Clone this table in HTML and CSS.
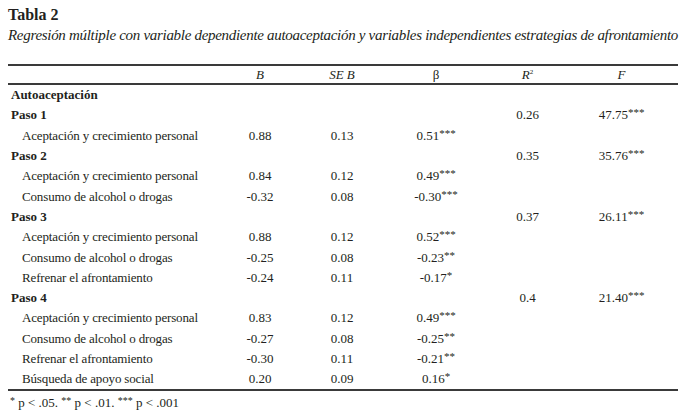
FILE: index.html
```html
<!DOCTYPE html>
<html lang="es">
<head>
<meta charset="utf-8">
<title>Tabla 2</title>
<link rel="stylesheet" href="styles.css">
</head>
<body>
<div class="page">
  <h1 class="title">Tabla 2</h1>
  <p class="caption">Regresión múltiple con variable dependiente autoaceptación y variables independientes estrategias de afrontamiento</p>
  <table class="reg">
    <colgroup>
      <col class="c-var"><col class="c-b"><col class="c-se"><col class="c-beta"><col class="c-r"><col class="c-f">
    </colgroup>
    <thead>
      <tr><th></th><th><i>B</i></th><th><i>SE B</i></th><th>β</th><th><i>R</i><sup>2</sup></th><th><i>F</i></th></tr>
    </thead>
    <tbody>
      <tr class="grp"><td class="lbl">Autoaceptación</td><td></td><td></td><td></td><td></td><td></td></tr>
      <tr class="step"><td class="lbl">Paso 1</td><td></td><td></td><td></td><td class="tn">0.26</td><td class="tn">47.75<sup>***</sup></td></tr>
      <tr><td class="sub">Aceptación y crecimiento personal</td><td>0.88</td><td>0.13</td><td class="tn">0.51<sup>***</sup></td><td></td><td></td></tr>
      <tr class="step"><td class="lbl">Paso 2</td><td></td><td></td><td></td><td class="tn">0.35</td><td class="tn">35.76<sup>***</sup></td></tr>
      <tr><td class="sub">Aceptación y crecimiento personal</td><td>0.84</td><td>0.12</td><td class="tn">0.49<sup>***</sup></td><td></td><td></td></tr>
      <tr><td class="sub">Consumo de alcohol o drogas</td><td>-0.32</td><td>0.08</td><td class="tn">-0.30<sup>***</sup></td><td></td><td></td></tr>
      <tr class="step"><td class="lbl">Paso 3</td><td></td><td></td><td></td><td class="tn">0.37</td><td class="tn">26.11<sup>***</sup></td></tr>
      <tr><td class="sub">Aceptación y crecimiento personal</td><td>0.88</td><td>0.12</td><td class="tn">0.52<sup>***</sup></td><td></td><td></td></tr>
      <tr><td class="sub">Consumo de alcohol o drogas</td><td>-0.25</td><td>0.08</td><td class="tn">-0.23<sup>**</sup></td><td></td><td></td></tr>
      <tr><td class="sub">Refrenar el afrontamiento</td><td>-0.24</td><td>0.11</td><td class="tn">-0.17<sup>*</sup></td><td></td><td></td></tr>
      <tr class="step"><td class="lbl">Paso 4</td><td></td><td></td><td></td><td class="tn">0.4</td><td class="tn">21.40<sup>***</sup></td></tr>
      <tr><td class="sub">Aceptación y crecimiento personal</td><td>0.83</td><td>0.12</td><td class="tn">0.49<sup>***</sup></td><td></td><td></td></tr>
      <tr><td class="sub">Consumo de alcohol o drogas</td><td>-0.27</td><td>0.08</td><td class="tn">-0.25<sup>**</sup></td><td></td><td></td></tr>
      <tr><td class="sub">Refrenar el afrontamiento</td><td>-0.30</td><td>0.11</td><td class="tn">-0.21<sup>**</sup></td><td></td><td></td></tr>
      <tr class="last"><td class="sub">Búsqueda de apoyo social</td><td>0.20</td><td>0.09</td><td class="tn">0.16<sup>*</sup></td><td></td><td></td></tr>
    </tbody>
  </table>
  <p class="note"><sup>*</sup> p &lt; .05. <sup>**</sup> p &lt; .01. <sup>***</sup> p &lt; .001</p>
</div>
</body>
</html>
```

FILE: styles.css
```css
html, body {
  margin: 0;
  padding: 0;
  background: #ffffff;
}
body {
  font-family: "Liberation Serif", "Times New Roman", serif;
  color: #231f20;
}
.page {
  padding: 5px 10px 0 8px;
}
.title {
  margin: 0;
  font-size: 16px;
  line-height: 20px;
  font-weight: bold;
}
.caption {
  margin: 0;
  font-style: italic;
  font-size: 15px;
  line-height: 20px;
  letter-spacing: -0.3px;
  white-space: nowrap;
}
.reg {
  margin-top: 19px;
  width: 670px;
  border-collapse: collapse;
  table-layout: fixed;
  font-size: 13px;
}
.c-var { width: 210px; }
.c-b { width: 84px; }
.c-se { width: 80px; }
.c-beta { width: 108px; }
.c-r { width: 75px; }
.c-f { width: 113px; }
.reg th {
  font-weight: normal;
  height: 17px;
  padding: 0;
  text-align: center;
  border-top: 2px solid #3a3a3a;
  border-bottom: 2px solid #3a3a3a;
}
.reg th sup {
  font-size: 7px;
  vertical-align: 5px;
  line-height: 0;
}
.reg td {
  height: 20.3px;
  padding: 0;
  text-align: center;
  white-space: nowrap;
}
.reg td sup {
  font-size: 11px;
  vertical-align: 3px;
  line-height: 0;
}
.reg td.lbl {
  text-align: left;
  font-weight: bold;
  padding-left: 3px;
}
.reg td.sub {
  text-align: left;
  padding-left: 14px;
  letter-spacing: -0.15px;
}
.reg tr.last td {
  border-bottom: 2px solid #3a3a3a;
}
.note {
  margin: 4px 0 0 2px;
  font-size: 13px;
  line-height: 16px;
}
.note sup {
  font-size: 10px;
  vertical-align: 3px;
  line-height: 0;
}
```
